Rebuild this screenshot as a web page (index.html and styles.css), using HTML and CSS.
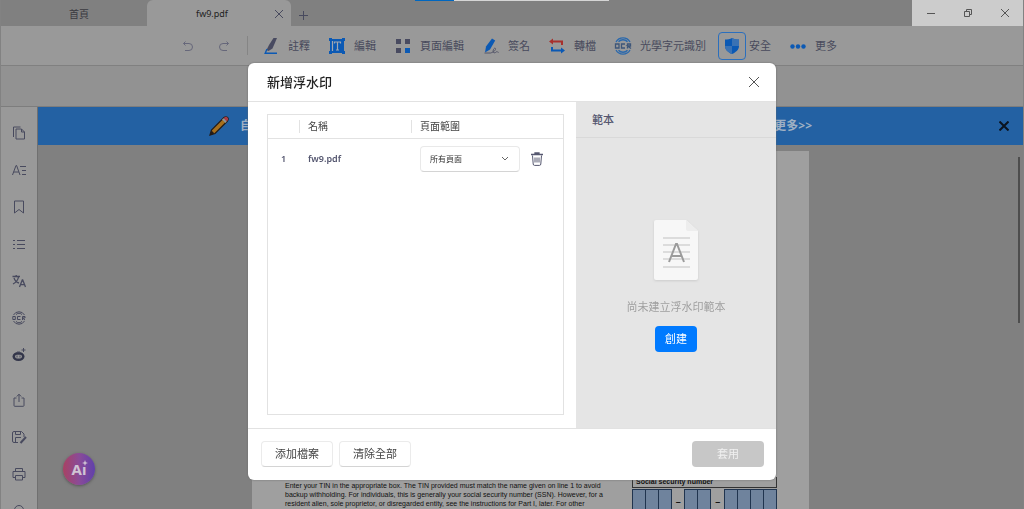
FILE: index.html
```html
<!DOCTYPE html>
<html lang="zh-Hant">
<head>
<meta charset="utf-8">
<meta name="viewport" content="width=device-width, initial-scale=1">
<title>fw9.pdf</title>
<link rel="stylesheet" href="styles.css">
</head>
<body>
<div class="app">
  <div class="progress"></div>
  <header class="tabbar">
    <button class="tab">首頁</button>
    <div class="tab tab-active">
      <span class="tab-name">fw9.pdf</span>
      <button class="icon-btn tab-close" aria-label="關閉分頁"><svg width="10" height="10" viewBox="0 0 10 10"><path d="M1 1l8 8M9 1l-8 8"/></svg></button>
    </div>
    <button class="icon-btn tab-add" aria-label="新分頁"><svg width="10" height="10" viewBox="0 0 10 10"><path d="M5.500 1v9M1 5.500h9"/></svg></button>
    <div class="window-controls">
      <button class="icon-btn" aria-label="最小化"><svg width="10" height="10" viewBox="0 0 10 10"><path d="M1 5.500h8"/></svg></button>
      <button class="icon-btn" aria-label="還原"><svg width="10" height="10" viewBox="0 0 10 10"><path d="M1.500 3.500h5v5h-5zM3.500 3.500v-2h5v5h-2"/></svg></button>
      <button class="icon-btn" aria-label="關閉"><svg width="10" height="10" viewBox="0 0 10 10"><path d="M1 1l8 8M9 1l-8 8"/></svg></button>
    </div>
  </header>

  <nav class="toolbar">
    <div class="history">
      <button class="icon-btn" aria-label="復原"><svg width="12" height="12" viewBox="0 0 12 12"><path d="M1.500 3.500H7a3.500 3.500 0 0 1 0 7H3M3.500 1.500l-2 2 2 2"/></svg></button>
      <button class="icon-btn" aria-label="重做"><svg width="12" height="12" viewBox="0 0 12 12"><path d="M10.500 3.500H5a3.500 3.500 0 0 0 0 7h4M8.500 1.500l2 2-2 2"/></svg></button>
    </div>
    <button class="tool">
      <svg width="18" height="18" viewBox="0 0 18 18"><path d="M11.500 1H15L10.500 11.500 6.500 14 4.500 13 7 8z" fill="#484a60"/><path d="M5 12l-1.800 4.300H15" fill="none" stroke="#0b59b4" stroke-width="1.400"/></svg>
      <span>註釋</span></button>
    <button class="tool">
      <svg width="18" height="18" viewBox="0 0 18 18"><path d="M1 1h3v1h10V1h3v3h-1v10h1v3h-3v-1H4v1H1v-3h1V4H1z" fill="#0b59b4"/><path d="M6.500 6.500v-1.500h6v1.500M9.500 5v8M8 13h3M4.500 4v10" fill="none" stroke="#a3a8b0" stroke-width="1.200"/></svg>
      <span>編輯</span></button>
    <button class="tool">
      <svg width="18" height="18" viewBox="0 0 18 18"><path d="M2 2h5v5H2zM11 2h5v5h-5zM2 11h5v5H2z" fill="#484a60"/><path d="M11 11h5v5h-5z" fill="#0b59b4"/></svg>
      <span>頁面編輯</span></button>
    <button class="tool">
      <svg width="18" height="18" viewBox="0 0 18 18"><path d="M10 1.500l3.200 2L8 12.500 3 15.500 4 9.500z" fill="#0b59b4"/><path d="M2.500 16h6c4-1 6-4 4.700-4.800-1.500-.6-3.200 4-1.200 4.600 1.400.3 2-.9 3-1.300.6.200.5 1 1.600.9" fill="none" stroke="#55576a"/></svg>
      <span>簽名</span></button>
    <button class="tool">
      <svg width="18" height="18" viewBox="0 0 18 18"><path d="M3 4.500h11v3.500" fill="none" stroke="#a8302c" stroke-width="2"/><path d="M5 1.500v6l-4-3z" fill="#a8302c"/><path d="M15 13.500H4V10" fill="none" stroke="#0b59b4" stroke-width="2"/><path d="M13 10.500v6l4-3z" fill="#0b59b4"/></svg>
      <span>轉檔</span></button>
    <button class="tool">
      <svg width="18" height="18" viewBox="0 0 18 18" fill="none" stroke="#2968ad" stroke-width="1.300"><path d="M2 5a8 8 0 0 1 14 0M4.500 4.800a6 6 0 0 1 9 0M2 13a8 8 0 0 0 14 0M4.500 13.200a6 6 0 0 0 9 0"/><path stroke="#3d5679" d="M1.500 7h3.500v4h-3.500zM11 7H7.500v4h3.500M13.500 11.500V7h3v2h-3l3.500 2.500"/></svg>
      <span>光學字元識別</span></button>
    <button class="tool tool-active">
      <span class="tool-frame"><svg width="18" height="18" viewBox="0 0 18 18"><path d="M9 1c2 1.200 4.500 1.500 7 1.500V9c0 4-3.500 6.500-7 8-3.500-1.500-7-4-7-8V2.500C4.500 2.500 7 2.200 9 1z" fill="#0b59b4"/><path d="M9 1c2 1.200 4.500 1.500 7 1.500V9H9zM2 9h7v8c-3.500-1.500-7-4-7-8z" fill="#3a72b4"/></svg></span>
      <span>安全</span></button>
    <button class="tool">
      <svg width="18" height="18" viewBox="0 0 18 18" fill="#0b59b4"><circle cx="3.500" cy="9.500" r="2.200"/><circle cx="9" cy="9.500" r="2.200"/><circle cx="14.500" cy="9.500" r="2.200"/></svg>
      <span>更多</span></button>
  </nav>
  <div class="subbar"></div>

  <div class="workspace">
    <aside class="sidebar">
      <button class="icon-btn" aria-label="頁面"><svg width="14" height="14" viewBox="0 0 14 14"><path d="M4 3h5.500L12.500 6v7H4zM9.500 3v3h3M1.500 11V1h7"/></svg></button>
      <button class="icon-btn" aria-label="文字"><svg width="14" height="14" viewBox="0 0 14 14"><path d="M.5 12L4 2.500h.6L8 12M1.800 9h5M8 3.500h6M10 7.500h4M10 11.500h4"/></svg></button>
      <button class="icon-btn" aria-label="書籤"><svg width="14" height="14" viewBox="0 0 14 14"><path d="M2.500 1h9v12L7 9.500 2.500 13z"/></svg></button>
      <button class="icon-btn" aria-label="大綱"><svg width="14" height="14" viewBox="0 0 14 14"><path d="M1 3.500h2M5 3.500h8M1 7.500h2M5 7.500h8M1 11.500h2M5 11.500h8"/></svg></button>
      <button class="icon-btn" aria-label="翻譯"><svg width="14" height="14" viewBox="0 0 14 14"><path d="M.5 2.500h7.500M4.200 1v1.500M2 4c1 3 3 4.500 5 5M6.500 3C6 6 4 8.500 1 10M7.500 13l2.800-7h.4l2.800 7M8.500 10.700h4" stroke-width="1.300"/></svg></button>
      <button class="icon-btn" aria-label="OCR"><svg width="14" height="14" viewBox="0 0 14 14"><path d="M1.500 4a6.300 6.300 0 0 1 11 0M1.500 10a6.300 6.300 0 0 0 11 0M4 3.600a4 4 0 0 1 6 0M4 10.400a4 4 0 0 0 6 0M.8 5.500h2.500v3H.8zM8.500 5.500H5.500v3h3M10.500 9V5.500h2.500V7h-2.500l2.500 2"/></svg></button>
      <button class="icon-btn" aria-label="AI 助理"><svg width="14" height="14" viewBox="0 0 14 14"><ellipse cx="6.500" cy="8.500" rx="6" ry="4.500" fill="#33364a" stroke="none"/><rect x="3" y="6.800" width="7" height="3.600" rx="1.800" fill="#999" stroke="none"/><path d="M5 7.500v2M8 7.500v2M11.500 0v4M9.500 2h4M5 4h3"/></svg></button>
      <button class="icon-btn sidebar-break" aria-label="分享"><svg width="14" height="14" viewBox="0 0 14 14"><path d="M4.500 5H2v7.500q0 .8.800.8h8.400q.8 0 .8-.8V5H9.500M7 9V1.500M4.800 3.500L7 1.200l2.200 2.300"/></svg></button>
      <button class="icon-btn" aria-label="另存新檔"><svg width="16" height="14" viewBox="0 0 16 14"><path d="M7 12.500H3q-1.500 0-1.500-1.500V3Q1.500 1.500 3 1.500h7.500L13 4v3M4.500 1.500v3h5v-3M4.500 12.500v-5h5.500"/><path d="M9.500 13l5.500-6" stroke-width="2"/></svg></button>
      <button class="icon-btn" aria-label="列印"><svg width="14" height="14" viewBox="0 0 14 14"><path d="M3.500 4.500v-3h7v3M3.500 10.500H1v-6h12v6h-2.500M3.500 8.500h7v4.500h-7z"/></svg></button>
      <button class="icon-btn" aria-label="搜尋"><svg width="14" height="14" viewBox="0 0 14 14"><circle cx="7" cy="6" r="4.500"/></svg></button>
    </aside>

    <main class="content">
      <div class="banner">
        <svg class="pencil" width="20" height="20" viewBox="0 0 20 20"><path d="M1 19l1.500-5L15 1.500Q17 0 18.500 1.500T18.500 5L6 17.500z" fill="#a8701d" stroke="#241c18" stroke-width="1.200"/><path d="M14.500 2.500L16 1q1.500-.6 2.500.5t.5 2.500L17.500 5.500z" fill="#a93c47"/><path d="M13 3.500l1.500-1.200 3.200 3.200L16.500 7z" fill="#8b959a"/><path d="M1 19l1.500-4.500L5.500 17.500z" fill="#241c18"/></svg>
        <p class="banner-text"><span>自</span><a href="#">更多&gt;&gt;</a></p>
        <button class="icon-btn banner-close" aria-label="關閉橫幅"><svg width="10" height="10" viewBox="0 0 10 10"><path d="M.5.5l9 9M9.500.5l-9 9"/></svg></button>
      </div>
      <div class="canvas">
        <article class="sheet">
          <p class="sheet-text">Enter your TIN in the appropriate box. The TIN provided must match the name given on line 1 to avoid<br>backup withholding. For individuals, this is generally your social security number (SSN). However, for a<br>resident alien, sole proprietor, or disregarded entity, see the instructions for Part I, later. For other</p>
          <div class="ssn">
            <div class="ssn-title">Social security number</div>
            <div class="ssn-row">
              <div class="cells"><i></i><i></i><i></i></div><b>–</b>
              <div class="cells"><i></i><i></i></div><b>–</b>
              <div class="cells"><i></i><i></i><i></i><i></i></div>
            </div>
          </div>
        </article>
        <div class="scroll-thumb"></div>
        <button class="ai" aria-label="AI">Aı<svg class="spark" width="6" height="6" viewBox="0 0 6 6"><path d="M3 0l.8 2.200L6 3l-2.200.8L3 6l-.8-2.200L0 3l2.200-.8z"/></svg></button>
      </div>
    </main>
  </div>
</div>

<div class="overlay">
  <section class="dialog" role="dialog" aria-labelledby="dialog-title">
    <header class="dialog-head">
      <h1 id="dialog-title">新增浮水印</h1>
      <button class="icon-btn" aria-label="關閉"><svg width="12" height="12" viewBox="0 0 12 12"><path d="M1 1l10 10M11 1L1 11"/></svg></button>
    </header>
    <div class="dialog-body">
      <div class="files">
        <div class="files-frame">
          <table>
            <thead><tr><th class="col-no"></th><th class="col-name"><span>名稱</span></th><th class="col-range"><span>頁面範圍</span></th></tr></thead>
            <tbody><tr>
              <td class="col-no">1</td>
              <td class="col-name">fw9.pdf</td>
              <td class="col-range"><div class="range">
                <div class="select"><select aria-label="頁面範圍"><option>所有頁面</option></select><svg width="8" height="6" viewBox="0 0 8 6"><path d="M1 1l3 3 3-3"/></svg></div>
                <button class="icon-btn trash" aria-label="刪除"><svg width="14" height="14" viewBox="0 0 14 14"><path d="M1 2.500h12M5 2V1h4v1" stroke-width="1.300"/><path d="M2.500 3.500l.7 8.500q.1 1.400 1.300 1.400h5q1.200 0 1.300-1.400l.7-8.500M5 5.500v5M7 5.500v5M9 5.500v5"/></svg></button>
              </div></td>
            </tr></tbody>
          </table>
        </div>
      </div>
      <aside class="templates">
        <h2>範本</h2>
        <div class="empty">
          <svg width="52" height="68" viewBox="0 0 52 68">
            <path class="doc" d="M6 3h30l12 11v47q0 2-2 2H6q-2 0-2-2V5q0-2 2-2z"/>
            <path d="M36 3v9q0 2 2 2h10z" fill="#ededed"/>
            <path d="M13 21h27M13 28h27M13 35h27M13 42h27M13 50h27" stroke="#dcdcdc" stroke-width="2"/>
            <path d="M19 45l7-18h1l7 18M21.500 39h10" fill="none" stroke="#9b9b9b" stroke-width="2"/>
          </svg>
          <p>尚未建立浮水印範本</p>
          <button class="btn btn-primary">創建</button>
        </div>
      </aside>
    </div>
    <footer class="dialog-foot">
      <button class="btn">添加檔案</button>
      <button class="btn">清除全部</button>
      <button class="btn btn-apply" disabled>套用</button>
    </footer>
  </section>
</div>
</body>
</html>
```

FILE: styles.css
```css
* { box-sizing: border-box; }
body {
  margin: 0;
  height: 100vh;
  overflow: hidden;
  font: 11px/16px "Noto Sans", "Noto Sans CJK TC", sans-serif;
  color: #45474f;
}
button { font: inherit; color: inherit; background: none; border: 0; padding: 0; }
h1, h2, p { margin: 0; }
svg { display: block; flex: none; }
.icon-btn { display: flex; align-items: center; justify-content: center; }
.icon-btn svg { fill: none; stroke: #484a5e; }

.app {
  height: 100vh;
  display: flex;
  flex-direction: column;
  position: relative;
  background: #999;
  border: solid #828282;
  border-width: 0 1px;
}
.progress {
  position: absolute;
  top: 0;
  left: 50%;
  width: 194px;
  height: 1px;
  margin-left: -97px;
  background: linear-gradient(90deg, #0067c0 39px, #d5d5d5 39px);
}

.tabbar { flex: none; height: 26px; display: flex; align-items: stretch; background: #808080; }
.tab {
  width: 146px;
  display: flex;
  align-items: center;
  justify-content: center;
  font-size: 10px;
  color: #3a3a40;
  padding: 2px 0 0 10px;
}
.tab-active {
  width: 144px;
  gap: 8px;
  padding: 2px 6px 0 12px;
  font-size: 9px;
  color: #222;
  background: #999;
  border-radius: 6px 6px 0 0;
}
.tab-name { flex: 1; text-align: center; }
.tab-close { width: 12px; }
.tab-add { width: 24px; padding-top: 4px; }
.window-controls { margin-left: auto; display: flex; background: #ccc; }
.window-controls .icon-btn { width: 37px; }
.window-controls svg { stroke: #555; }

.toolbar {
  flex: none;
  height: 40px;
  display: flex;
  align-items: center;
  gap: 18px;
  padding-left: 181px;
  border-bottom: 1px solid #808080;
}
.history {
  display: flex;
  gap: 24px;
  align-items: center;
  height: 19px;
  width: 66px;
  border-right: 1px solid #858585;
  margin-right: -4px;
}
.history svg { stroke: #66677a; }
.tool { display: flex; align-items: center; gap: 8px; white-space: nowrap; color: #484a5c; }
.tool-active { gap: 3px; margin-left: -6px; }
.tool-frame { padding: 4px; border: 1px solid #2b6fbd; border-radius: 4px; }
.subbar { flex: none; height: 41px; background: #929292; border-bottom: 1px solid #7d7d7d; }

.workspace { flex: 1; min-height: 0; display: flex; }
.sidebar {
  width: 37px;
  display: flex;
  flex-direction: column;
  padding-top: 7px;
  border-right: 1px solid #707070;
  overflow: hidden;
}
.sidebar .icon-btn { flex: none; height: 37px; }
.sidebar-break { margin-top: 8px; }

.content { flex: 1; min-width: 0; display: flex; flex-direction: column; background: #808080; }
.banner { flex: none; height: 38px; display: flex; align-items: center; padding: 0 14px 0 171px; background: #2361a3; }
.banner-text {
  flex: none;
  width: 572px;
  margin-left: 11px;
  display: flex;
  justify-content: space-between;
  font-size: 12px;
  font-weight: 700;
  color: #9fb0c3;
}
.banner-text a { color: inherit; text-decoration: none; }
.banner-close { margin-left: auto; }
.banner-close svg { stroke: #0b1420; stroke-width: 2; }

.canvas { flex: 1; min-height: 0; position: relative; overflow: hidden; padding-top: 6px; }
.sheet {
  width: 557px;
  max-width: 100%;
  margin: 0 auto;
  padding: 326px 32px 40px 33px;
  display: flex;
  justify-content: space-between;
  align-items: flex-start;
  background: #9f9f9f;
  color: #101010;
  font-family: "Liberation Sans", sans-serif;
}
.sheet-text { font-size: 7px; line-height: 9px; white-space: nowrap; padding-top: 4px; }
.ssn { width: 145px; font-size: 7px; }
.ssn-title { height: 11px; line-height: 10px; font-weight: 700; padding-left: 3px; border: 1px solid #333; border-top: 0; }
.ssn-row { display: flex; justify-content: space-between; align-items: center; padding-top: 1px; }
.ssn-row b { font-size: 9px; }
.cells { display: flex; border: solid #20344f; border-width: 1px 0 0 1px; }
.cells i { width: 13px; height: 24px; background: #6f839d; border-right: 1px solid #20344f; }
.scroll-thumb { position: absolute; top: 12px; right: 3px; width: 2px; height: 166px; background: #4d4d4d; }
.ai {
  position: absolute;
  left: 25px;
  bottom: 24px;
  width: 32px;
  height: 32px;
  border-radius: 50%;
  background: linear-gradient(90deg, #a84263, #8a4b98 50%, #6040ab);
  color: #d0c4d4;
  font-size: 15px;
  font-weight: 700;
  box-shadow: 0 1px 3px #555;
}
.spark { position: absolute; top: 7px; right: 7px; fill: #d0c4d4; }

.overlay { position: fixed; inset: 0; display: flex; align-items: center; justify-content: center; padding-top: 34px; }
.dialog { width: 528px; max-width: 100%; background: #fff; border-radius: 6px; overflow: hidden; box-shadow: 0 0 2px #666; }
.dialog-head {
  height: 39px;
  display: flex;
  align-items: center;
  justify-content: space-between;
  padding: 0 16px 0 19px;
  border-bottom: 1px solid #e2e2e2;
}
.dialog-head h1 { font-size: 13px; line-height: 20px; font-weight: 500; color: #222; }
.dialog-head svg { stroke: #555; }
.dialog-body { display: grid; grid-template-columns: 1fr 200px; min-height: 326px; }
.files { display: flex; padding: 12px 12px 13px 19px; }
.files-frame { flex: 1; border: 1px solid #e2e2e2; }
table { width: 100%; border-collapse: collapse; table-layout: fixed; }
th, td { padding: 0; text-align: left; }
th { height: 23px; font-size: 10px; font-weight: 400; color: #444; border-bottom: 1px solid #e2e2e2; }
th span { display: block; height: 13px; line-height: 13px; padding-left: 8px; border-left: 1px solid #e2e2e2; }
td { height: 42px; font-size: 9px; font-weight: 600; color: #54566f; }
.col-no { width: 31px; }
.col-name { width: 112px; }
td.col-no { padding-left: 13px; }
td.col-name, td.col-range { padding-left: 9px; }
.range { display: flex; align-items: center; gap: 10px; }
.select { position: relative; width: 100px; }
.select select {
  appearance: none;
  width: 100%;
  height: 26px;
  padding: 0 20px 2px 9px;
  font: 8px "Noto Sans", "Noto Sans CJK TC", sans-serif;
  color: #333;
  background: #fff;
  border: 1px solid #e9e9e9;
  border-bottom-color: #d4d4d4;
  border-radius: 4px;
}
.select svg { position: absolute; right: 11px; top: 10px; fill: none; stroke: #666; pointer-events: none; }
.trash svg { stroke: #55576f; }

.templates { background: #e5e5e5; display: flex; flex-direction: column; }
.templates h2 {
  height: 36px;
  padding-left: 16px;
  font-size: 11px;
  line-height: 36px;
  font-weight: 500;
  color: #54566f;
  border-bottom: 1px solid #d9d9d9;
}
.empty { flex: 1; display: flex; flex-direction: column; align-items: center; justify-content: center; padding-top: 3px; }
.doc { fill: #f7f7f7; filter: drop-shadow(0 1px 1px #ccc); }
.empty p { margin: 14px 0 11px; color: #a0a0a0; }

.dialog-foot { display: flex; gap: 6px; padding: 12px 12px 13px 13px; border-top: 1px solid #e2e2e2; }
.btn {
  width: 72px;
  height: 26px;
  font-size: 11px;
  color: #444;
  background: #fff;
  border: 1px solid #ebebeb;
  border-bottom-color: #d4d4d4;
  border-radius: 4px;
}
.btn-primary { width: 42px; color: #fff; background: #007aff; border: 0; }
.btn-apply { margin-left: auto; color: #f1f1f1; background: #c7c7c7; border: 0; }
```
